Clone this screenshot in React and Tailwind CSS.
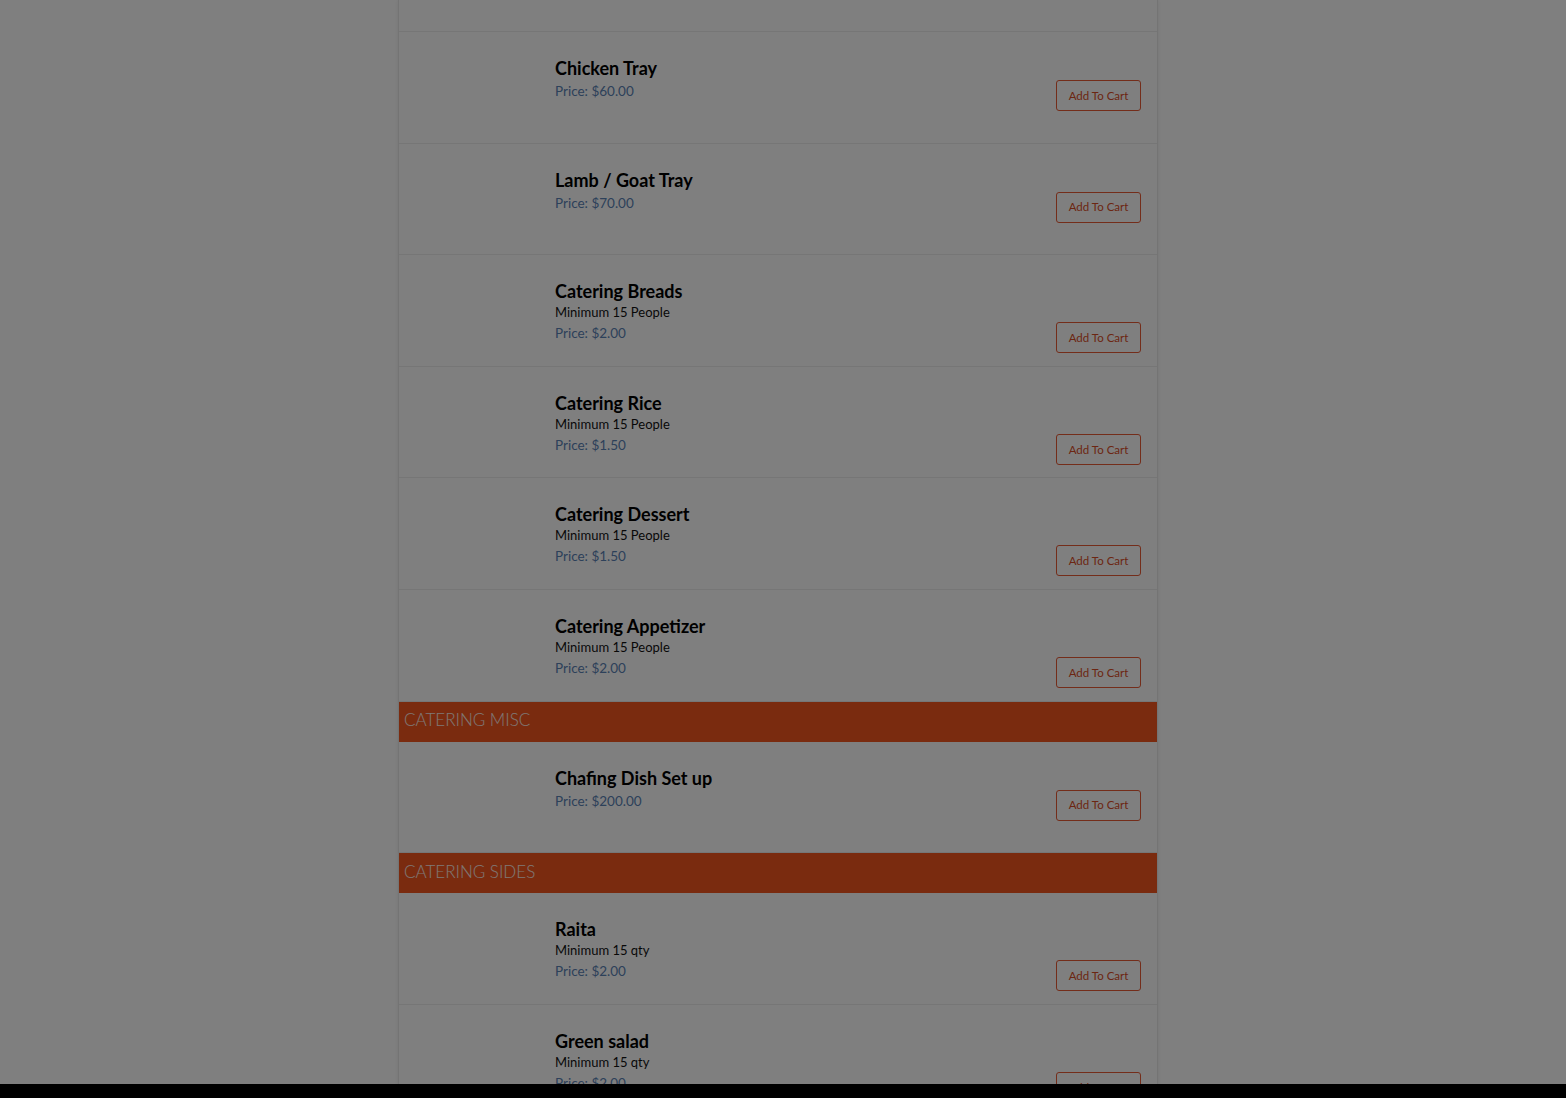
import React from 'react';

const sections = [
  {
    title: null,
    items: [
      { name: 'Chicken Tray', price: '$60.00' },
      { name: 'Lamb / Goat Tray', price: '$70.00' },
      { name: 'Catering Breads', note: 'Minimum 15 People', price: '$2.00' },
      { name: 'Catering Rice', note: 'Minimum 15 People', price: '$1.50' },
      { name: 'Catering Dessert', note: 'Minimum 15 People', price: '$1.50' },
      { name: 'Catering Appetizer', note: 'Minimum 15 People', price: '$2.00' },
    ],
  },
  {
    title: 'CATERING MISC',
    items: [{ name: 'Chafing Dish Set up', price: '$200.00' }],
  },
  {
    title: 'CATERING SIDES',
    items: [
      { name: 'Raita', note: 'Minimum 15 qty', price: '$2.00' },
      { name: 'Green salad', note: 'Minimum 15 qty', price: '$2.00' },
    ],
  },
];

function MenuRow({ item }) {
  return (
    <div className="flex h-[111.6px] border-b border-[#ececec]">
      {/* image slot, empty */}
      <div className="w-[156px] shrink-0" />
      <div className="flex-1 pt-[24px] pr-[16px]">
        <div className="text-[18px] leading-6 font-bold text-black">{item.name}</div>
        {item.note && (
          <div className="text-[13px] leading-[19px] text-[#111]">{item.note}</div>
        )}
        <div className="flex items-start justify-between">
          <div className="text-[13.5px] leading-[22px] text-[#5a82b4]">Price: {item.price}</div>
          <button className="w-[85px] h-[31px] border border-[#e85a34] rounded-[3px] text-[11.5px] text-[#d94c26] bg-white">
            Add To Cart
          </button>
        </div>
      </div>
    </div>
  );
}

export default function App() {
  return (
    <div className="min-h-screen bg-white font-['Lato','Noto_Sans',sans-serif] overflow-hidden">
      <div className="ml-[398px] w-[760px] border-x border-[#e8e8e8] shadow-[0_0_4px_rgba(0,0,0,0.08)]">
        {/* tail of the row above the fold */}
        <div className="h-[32px] border-b border-[#ececec]" />
        {sections.map((sec, i) => (
          <div key={i}>
            {sec.title && (
              <div className="h-[40px] bg-[#f4561f] px-[5px] pb-[3px] flex items-center text-[17px] font-light text-[#fff0ea]">
                {sec.title}
              </div>
            )}
            {sec.items.map((item) => (
              <MenuRow key={item.name} item={item} />
            ))}
          </div>
        ))}
      </div>

      {/* modal backdrop */}
      <div className="fixed inset-0 bg-black/50" />
      <div className="fixed left-0 right-0 bottom-0 h-[14px] bg-black" />
    </div>
  );
}
